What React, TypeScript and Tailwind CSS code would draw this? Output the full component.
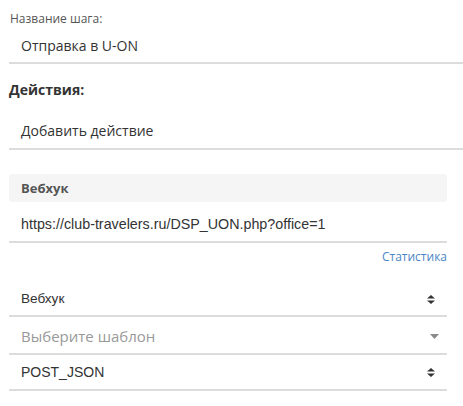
import React from "react";

function SortIcon() {
  return (
    <svg width="8" height="9" viewBox="0 0 8 9" className="shrink-0">
      <path d="M4 0 L8 3.6 L0 3.6 Z" fill="#333" />
      <path d="M0 5.4 L8 5.4 L4 9 Z" fill="#333" />
    </svg>
  );
}

function CaretIcon() {
  return (
    <svg width="9" height="5" viewBox="0 0 9 5" className="shrink-0">
      <path d="M0 0 L9 0 L4.5 5 Z" fill="#8a8a8a" />
    </svg>
  );
}

export default function App() {
  return (
    <div className="w-[463px] h-[406px] bg-white overflow-hidden text-[#333] font-['Open_Sans','Noto_Sans',sans-serif]">
      <div className="pl-[9px]">
        <div className="pt-[11px] pl-[1px] text-[12px] leading-[16px] text-[#555]">
          Название шага:
        </div>
        <div className="pl-[12px] pt-[9px] pb-[6px] border-b-2 border-[#dcdcdc] text-[14px] leading-[20px] text-[#333] w-[480px]">
          Отправка в U-ON
        </div>

        <div className="mt-[16px] text-[14px] leading-[20px] font-bold text-[#333]">
          Действия:
        </div>
        <div className="pl-[12px] pt-[21px] pb-[7px] border-b-2 border-[#dcdcdc] text-[14px] leading-[20px] text-[#333] w-[480px]">
          Добавить действие
        </div>

        <div className="w-[438px] mt-[24px] flex flex-col">
          <div className="bg-[#f5f5f5] rounded-[3px] px-[12px] py-[5px] text-[13px] leading-[18px] font-bold text-[#555]">
            Вебхук
          </div>
          <div className="pl-[12px] pt-[12px] pb-[7px] border-b-2 border-[#dcdcdc] text-[14.3px] leading-[20px] text-[#333] font-['Liberation_Sans',Arial,sans-serif]">
            https://club-travelers.ru/DSP_UON.php?office=1
          </div>
          <div className="mt-[6px] flex justify-end">
            <span className="text-[12px] leading-[16px] text-[#4a86c5]">Статистика</span>
          </div>

          <div className="mt-[24px] px-[12px] pb-[6px] border-b-2 border-[#dcdcdc] flex items-center justify-between">
            <span className="text-[13.6px] leading-[20px] text-[#333] font-['Liberation_Sans',Arial,sans-serif]">
              Вебхук
            </span>
            <SortIcon />
          </div>
          <div className="pl-[12px] pr-[8px] pt-[9px] pb-[7px] border-b-2 border-[#dcdcdc] flex items-center justify-between">
            <span className="text-[15px] leading-[20px] text-[#999]">Выберите шаблон</span>
            <CaretIcon />
          </div>
          <div className="px-[12px] py-[7px] border-b-2 border-[#dcdcdc] flex items-center justify-between">
            <span className="text-[14px] leading-[20px] text-[#333] font-['Liberation_Sans',Arial,sans-serif]">
              POST_JSON
            </span>
            <SortIcon />
          </div>
        </div>
      </div>
    </div>
  );
}
